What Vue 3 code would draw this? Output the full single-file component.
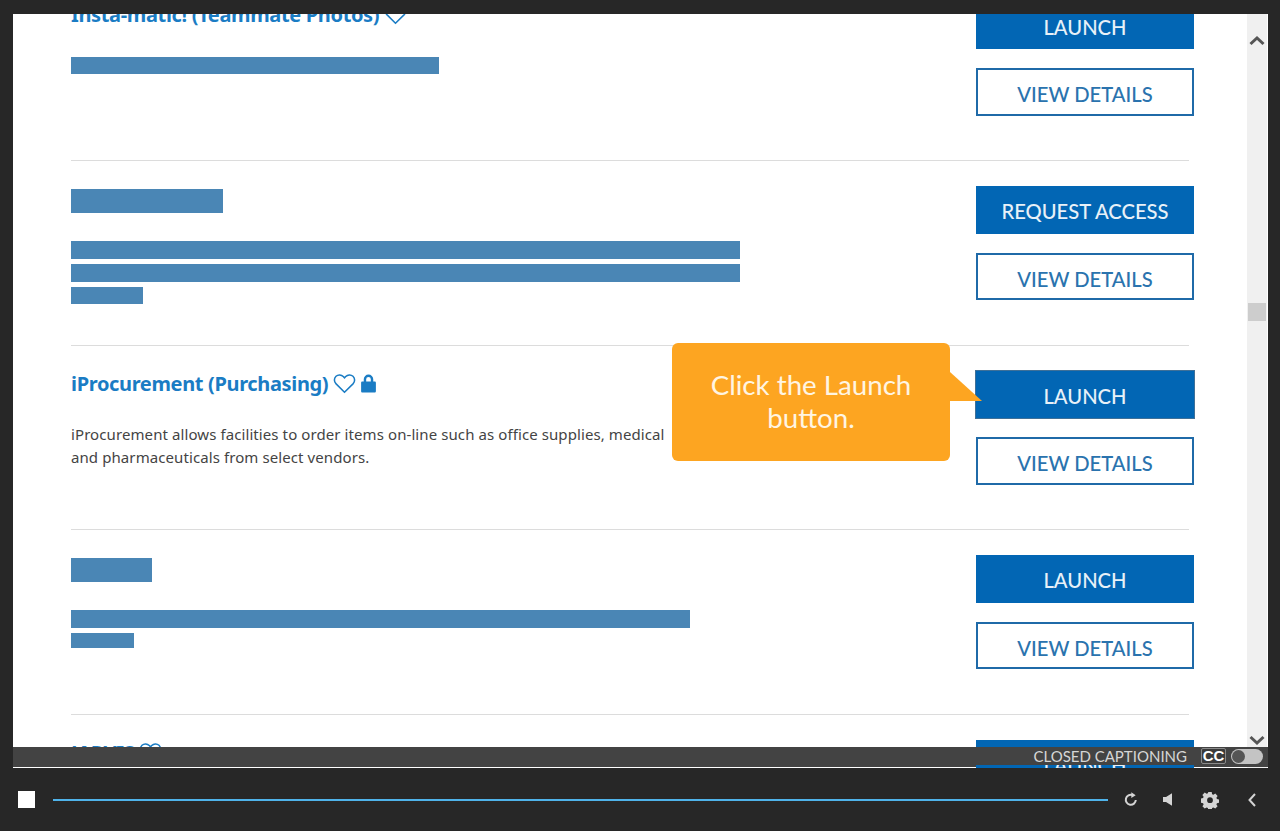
<script setup>
const rows = [
  { key: 'insta', title: 'Insta-matic! (Teammate Photos)', action: 'LAUNCH', bars: [{ w: 368, h: 17 }] },
  { key: 'b', titleBar: 152, action: 'REQUEST ACCESS', bars: [{ w: 669, h: 18 }, { w: 669, h: 18 }, { w: 72, h: 17 }] },
  { key: 'ip', title: 'iProcurement (Purchasing)', lock: true, action: 'LAUNCH', highlight: true,
    text: 'iProcurement allows facilities to order items on-line such as office supplies, medical and pharmaceuticals from select vendors.' },
  { key: 'c', titleBar: 81, action: 'LAUNCH', bars: [{ w: 619, h: 18 }, { w: 63, h: 15 }] },
  { key: 'jarvis', title: 'JARVIS', action: 'LAUNCH', bars: [] }
]
</script>

<template>
  <div class="player">
    <div class="stage">
      <div class="viewport">
        <div class="list">
          <article v-for="row in rows" :key="row.key" class="row">
            <div class="info">
              <div v-if="row.titleBar" class="title-bar" :style="{ width: row.titleBar + 'px' }"></div>
              <h3 v-else class="title">
                <span>{{ row.title }}</span>
                <svg class="heart" viewBox="0 0 24 22" aria-hidden="true">
                  <path d="M12 20.200 3.200 11.400C.8 9 .9 5.400 3.100 3.400c2.200-2 5.600-1.800 7.600.3L12 5.100l1.300-1.400c2-2.100 5.400-2.300 7.600-.3 2.200 2 2.300 5.600 0 8z" />
                </svg>
                <svg v-if="row.lock" class="lock" viewBox="0 0 16 18" aria-hidden="true">
                  <path d="M3.500 7V5a4.500 4.500 0 0 1 9 0v2h1.300c.7 0 1.200.5 1.200 1.200v8.100c0 .7-.5 1.200-1.200 1.200H2.200c-.7 0-1.200-.5-1.200-1.200V8.200C1 7.500 1.500 7 2.200 7zm2.300 0h4.400V5a2.200 2.200 0 0 0-4.400 0z" />
                </svg>
              </h3>
              <p v-if="row.text" class="text">{{ row.text }}</p>
              <div v-if="row.bars && row.bars.length" class="bars">
                <div v-for="(bar, i) in row.bars" :key="i" class="bar" :style="{ width: bar.w + 'px', height: bar.h + 'px' }"></div>
              </div>
            </div>
            <div class="actions">
              <button class="btn primary" :class="{ highlight: row.highlight }">{{ row.action }}</button>
              <button class="btn outline">VIEW DETAILS</button>
            </div>
          </article>
        </div>

        <div class="callout">
          Click the Launch<br />button.
          <svg class="tail" viewBox="0 0 33 30" aria-hidden="true"><path d="M0 0 32 29H0z" /></svg>
        </div>
      </div>

      <div class="scrollbar">
        <svg class="arrow" viewBox="0 0 16 10" aria-hidden="true"><path d="M1.500 8.500 8 2.500l6.500 6" /></svg>
        <div class="thumb"></div>
        <svg class="arrow down" viewBox="0 0 16 10" aria-hidden="true"><path d="M1.500 1.500 8 7.500l6.500-6" /></svg>
      </div>

      <div class="cc-band"></div>
      <div class="cc-bar">
        <span class="cc-label">CLOSED CAPTIONING</span>
        <span class="cc-badge">CC</span>
        <span class="cc-toggle"><i></i></span>
      </div>
    </div>

    <div class="controls">
      <div class="stop"></div>
      <div class="progress"></div>
      <svg class="ctl replay" viewBox="0 0 16 16" aria-hidden="true">
        <path class="stroke" d="M12.800 8.500a5 5 0 1 1-3.300-5" />
        <path class="fill" d="M8.300.8 12.700 3.700 8.300 6.500z" />
      </svg>
      <svg class="ctl speaker" viewBox="0 0 12 14" aria-hidden="true">
        <path class="fill" d="M1 4.500h3L10 .8v12.400L4 9.500H1z" />
      </svg>
      <svg class="ctl gear" viewBox="0 0 18 18" aria-hidden="true">
        <path class="fill" fill-rule="evenodd" d="M7.300 1h3.400l.4 2.200 1.300.6 1.900-1.200 2.300 2.400-1.200 1.800.5 1.300 2.100.4v3.300l-2.100.4-.5 1.300 1.200 1.800-2.300 2.300-1.900-1.200-1.300.6-.4 2.200H7.300l-.4-2.200-1.300-.6-1.900 1.200-2.300-2.300 1.200-1.800-.5-1.300-2.100-.4V7.500l2.100-.4.5-1.300-1.200-1.800L3.700 1.600l1.900 1.200 1.300-.6zM9 6.300a2.900 2.900 0 1 0 0 5.800 2.900 2.900 0 0 0 0-5.800z" />
      </svg>
      <svg class="ctl chevron" viewBox="0 0 10 16" aria-hidden="true">
        <path class="stroke" d="M8 2 2.500 8 8 14" />
      </svg>
    </div>
  </div>
</template>

<style>
html, body { margin: 0; background: #272727; }
</style>

<style scoped>
.player {
  width: 1280px;
  height: 831px;
  background: #272727;
  display: flex;
  flex-direction: column;
  overflow: hidden;
  font-family: "Lato", "Liberation Sans", sans-serif;
}
.stage {
  position: relative;
  margin: 14px 12px 0 13px;
  height: 754px;
  display: flex;
  background: #fff;
  overflow: hidden;
}
.viewport {
  flex: 1;
  overflow: hidden;
  position: relative;
}
.list {
  margin-top: -37.500px;
  padding: 0 53px 0 58px;
}
.row {
  height: 184.500px;
  box-sizing: border-box;
  padding-top: 25px;
  display: flex;
  justify-content: space-between;
  border-bottom: 1px solid #dcdcdc;
  margin-right: 5px;
}
.info { width: 680px; padding-top: 3px; }
.actions {
  width: 218px;
  margin-right: -5px;
  display: flex;
  flex-direction: column;
  gap: 19px;
}
.title {
  margin: -2px 0 0;
  padding-bottom: 2px;
  height: 24px;
  display: flex;
  align-items: center;
  gap: 5px;
  font: 700 20px/24px "Noto Sans", sans-serif;
  color: #1a7cc4;
  white-space: nowrap;
  letter-spacing: -0.350px;
}
.heart { width: 23px; height: 21px; fill: none; stroke: #1a7cc4; stroke-width: 1.600; flex: none; }
.lock { width: 17px; height: 19px; fill: #1a7cc4; margin: -1px 0 0 -1px; flex: none; }
.title-bar { height: 24px; background: #4a86b5; }
.text {
  margin: 25px 0 0;
  width: 600px;
  font: 400 15px/23px "Noto Sans", sans-serif;
  color: #444;
  letter-spacing: 0.090px;
}
.bars {
  margin-top: 28px;
  display: flex;
  flex-direction: column;
  gap: 5px;
}
.bar { background: #4a86b5; }
.btn {
  display: block;
  box-sizing: border-box;
  width: 218px;
  height: 47.500px;
  padding: 3px 0 0;
  border: 0;
  font: 500 20.200px/1 "Lato", sans-serif;
  cursor: pointer;
}
.primary { background: #0266b4; color: #e8f1f8; position: relative; z-index: 2; }
.highlight { box-shadow: 0 0 0 1px #3f7098; }
.outline { background: #fff; border: 2px solid #1f6aa8; color: #2a73ae; padding-top: 5px; }
.callout {
  position: absolute;
  z-index: 4;
  left: 659px;
  top: 329px;
  width: 278px;
  height: 118px;
  box-sizing: border-box;
  padding-top: 25px;
  border-radius: 6px;
  background: #fda521;
  color: #fff5e3;
  font-size: 27.700px;
  line-height: 33px;
  text-align: center;
}
.tail {
  position: absolute;
  left: 278px;
  top: 29px;
  width: 33px;
  height: 30px;
  fill: #fda521;
}
.scrollbar {
  position: relative;
  width: 21px;
  box-sizing: border-box;
  border-right: 1px solid #fff;
  background: #f0f0f0;
  flex: none;
}
.arrow {
  position: absolute;
  left: 2px;
  top: 21px;
  width: 16px;
  height: 11px;
  fill: none;
  stroke: #555;
  stroke-width: 3;
}
.arrow.down { top: 721px; }
.thumb {
  position: absolute;
  left: 1px;
  top: 289px;
  width: 18px;
  height: 18px;
  background: #cdcdcd;
}
.cc-band {
  position: absolute;
  z-index: 1;
  left: 0;
  right: 0;
  top: 733px;
  height: 20px;
  background: #434343;
}
.cc-bar {
  position: absolute;
  z-index: 3;
  left: 0;
  right: 0;
  top: 733px;
  height: 18px;
  background: #434343;
  display: flex;
  align-items: center;
  justify-content: flex-end;
  padding-right: 5px;
  box-sizing: border-box;
  color: #d6d6d6;
  font-size: 15px;
}
.cc-label { margin-right: 14px; }
.cc-badge {
  width: 25px;
  height: 16px;
  box-sizing: border-box;
  background: #3a3a3a;
  color: #fff;
  border: 1px solid #8a8a8a;
  border-radius: 2px;
  font: 700 15px/14px "Liberation Sans", sans-serif;
  text-align: center;
  margin-right: 5px;
}
.cc-toggle {
  width: 32px;
  height: 15px;
  border-radius: 7.500px;
  background: #c4c4c4;
  position: relative;
}
.cc-toggle i {
  position: absolute;
  left: 1px;
  top: 1px;
  width: 13px;
  height: 13px;
  border-radius: 50%;
  background: #555;
}
.controls {
  flex: 1;
  display: flex;
  align-items: center;
}
.stop {
  width: 17px;
  height: 17px;
  margin-left: 18px;
  background: #fff;
  flex: none;
}
.progress {
  width: 1055px;
  height: 2px;
  margin-left: 18px;
  background: #4fb3ea;
  flex: none;
}
.ctl { flex: none; }
.stroke { fill: none; stroke: #d4d4d4; stroke-width: 2; }
.fill { fill: #d4d4d4; }
.replay { width: 16px; height: 17px; margin-left: 15px; }
.speaker { width: 12px; height: 15px; margin-left: 23px; }
.gear { width: 18px; height: 18px; margin-left: 27px; }
.chevron { width: 10px; height: 16px; margin-left: 28px; }
</style>
